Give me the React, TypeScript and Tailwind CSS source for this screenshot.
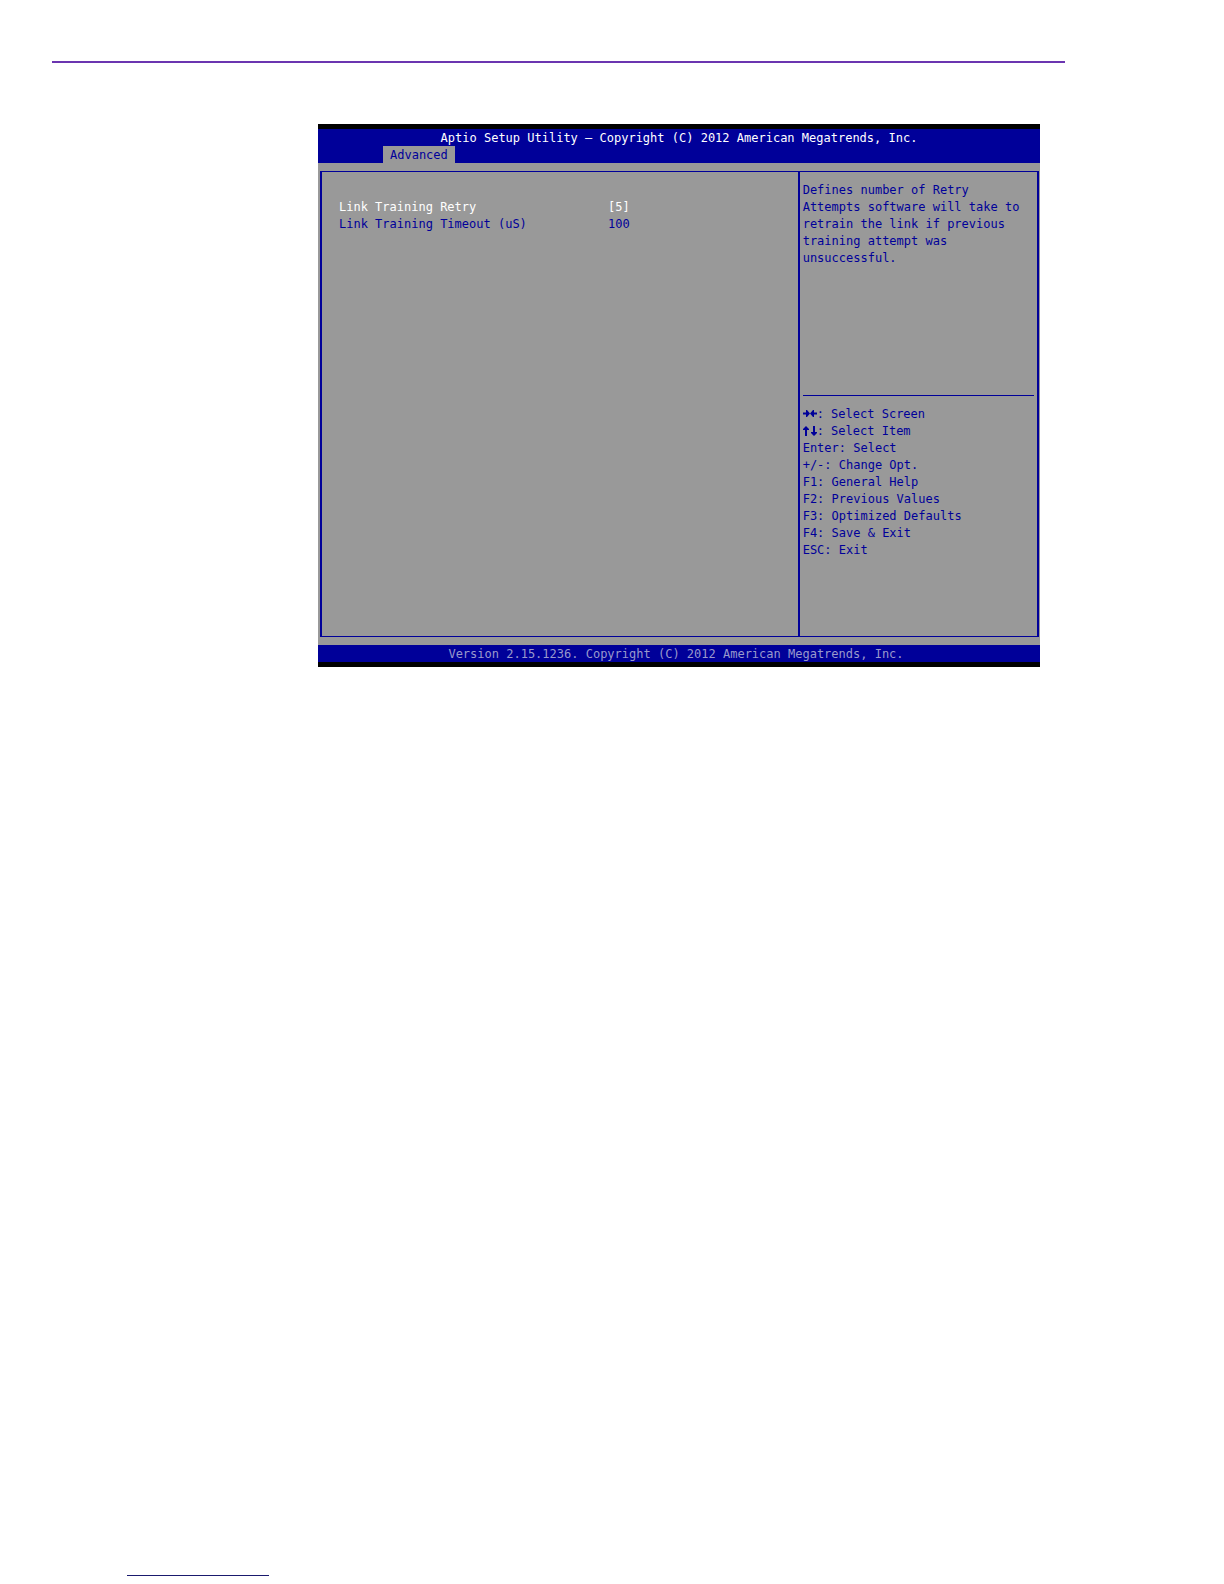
import { useState } from "react";

const helpKeys = [
  { keys: "Enter", action: "Select" },
  { keys: "+/-", action: "Change Opt." },
  { keys: "F1", action: "General Help" },
  { keys: "F2", action: "Previous Values" },
  { keys: "F3", action: "Optimized Defaults" },
  { keys: "F4", action: "Save & Exit" },
  { keys: "ESC", action: "Exit" },
];

function ScreenArrows() {
  return (
    <svg className="w-[14px] h-[11px] shrink-0" viewBox="0 0 14 11" fill="currentColor" aria-hidden="true">
      <path d="M0 3.500h3V1h1l3 3.500L4 8H3V5.500H0z" />
      <path d="M14 3.500h-3V1h-1L7 4.500L10 8h1V5.500h3z" />
    </svg>
  );
}

function ItemArrows() {
  return (
    <svg className="w-[14px] h-[11px] shrink-0" viewBox="0 0 14 11" fill="currentColor" aria-hidden="true">
      <path d="M2 10V4H0V3L3 0L6 3V4H4V10z" />
      <path d="M10 0V6H8V7L11 10L14 7V6H12V0z" />
    </svg>
  );
}

export default function App() {
  const [retry, setRetry] = useState("5");
  const [timeout, setTimeoutValue] = useState("100");

  return (
    <div className="min-h-screen flex flex-col bg-white">
      {/* Page rule */}
      <div className="mt-[61px] ml-[52px] mr-[159px] h-[2px] bg-[#6b35b0]" />

      {/* Setup utility */}
      <main className="mt-[61px] ml-[318px] mr-[184px] border-y-[5px] border-black bg-[#999999] text-[#000099] font-['DejaVu_Sans_Mono',monospace] text-[12px] leading-[17px]">
        <header className="bg-[#000099]">
          <h1 className="pt-[2px] leading-[15px] text-center text-white whitespace-nowrap">
            Aptio Setup Utility – Copyright (C) 2012 American Megatrends, Inc.
          </h1>
          <nav className="flex pl-[65px]">
            <button type="button" className="bg-[#999999] px-[7px] pt-[2px] leading-[15px]">
              Advanced
            </button>
          </nav>
        </header>

        <div className="my-2 ml-[2px] mr-px grid grid-cols-[2fr_1fr] border-x-2 border-y border-[#000099]">
          {/* Settings */}
          <section className="pt-[27px] pl-[17px]">
            <div className="grid grid-cols-[269px_1fr] text-white">
              <label htmlFor="retry">Link Training Retry</label>
              <select
                id="retry"
                value={retry}
                onChange={(e) => setRetry(e.target.value)}
                className="appearance-none bg-transparent outline-none w-20"
              >
                <option value="2">[2]</option>
                <option value="3">[3]</option>
                <option value="5">[5]</option>
              </select>
            </div>
            <div className="grid grid-cols-[269px_1fr]">
              <label htmlFor="timeout">Link Training Timeout (uS)</label>
              <input
                id="timeout"
                type="text"
                value={timeout}
                onChange={(e) => setTimeoutValue(e.target.value)}
                className="bg-transparent outline-none w-20"
              />
            </div>
          </section>

          {/* Help */}
          <aside className="-ml-px border-l-2 border-[#000099] px-[3px] pt-[10px] pb-[77px]">
            <p className="min-h-[213px] pr-2">
              Defines number of Retry Attempts software will take to retrain the link if previous training attempt was unsuccessful.
            </p>
            <ul className="border-t border-[#000099] pt-[10px]">
              <li className="flex items-center">
                <ScreenArrows />: Select Screen
              </li>
              <li className="flex items-center">
                <ItemArrows />: Select Item
              </li>
              {helpKeys.map((item) => (
                <li key={item.keys}>
                  {item.keys}: {item.action}
                </li>
              ))}
            </ul>
          </aside>
        </div>

        <footer className="pt-[2px] pr-[6px] leading-[15px] bg-[#000099] text-center text-[#9999cc] whitespace-nowrap">
          Version 2.15.1236. Copyright (C) 2012 American Megatrends, Inc.
        </footer>
      </main>

      <div className="mt-auto mb-2 ml-[127px] w-[142px] h-px bg-[#1a1a6e]" />
    </div>
  );
}
